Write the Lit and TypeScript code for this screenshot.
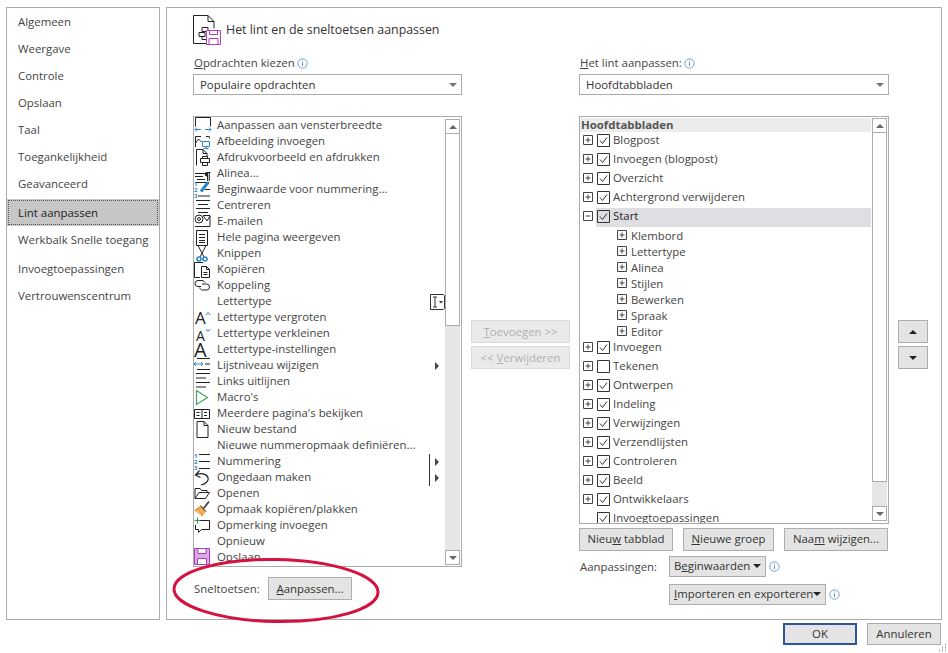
import { LitElement, css, html, svg, TemplateResult } from 'lit';
import { customElement } from 'lit/decorators.js';

const BLUE = '#2b88c8';

// Icons are drawn on a 23x16 box, they may stick out of the row (as in Office)
const digits = svg`<text font-size="6" font-family="Open Sans" font-weight="700" fill=${BLUE} stroke="none"><tspan x="0" y="4">1</tspan><tspan x="0" y="10">2</tspan><tspan x="0" y="16">3</tspan></text>`;
const letterA = (x: number, y: number, size: number) =>
  svg`<text x=${x} y=${y} font-size=${size} font-family="Open Sans" fill="#222" stroke="none">A</text>`;
const icons: Record<string, any> = {
  fit: svg`<path d="M1.5 8.500V-.5h15V8.500"/><path stroke=${BLUE} d="M1 11.500h6M1 11.500l2-2M1 11.500l2 2M17 11.500h-6M17 11.500l-2-2M17 11.500l-2 2"/>`,
  picture: svg`<path d="M1.5 13V2.500H7M1.5 9l3-4 3 3M12 2.500h3M15.5 2.500v2"/><path stroke=${BLUE} d="M8.5 7.500h7v5h-7zM12 12.500v2M9.500 14.500h5"/>`,
  print: svg`<path d="M2.500 15.500v-16H9l4 4v3M9 -.5v4h4"/><path d="M8.500 8.500v-2h5v2M6.500 8.500h9v4h-9zM8.500 12.500v3h5v-3"/>`,
  para: svg`<path d="M1 7.500h10M1 10.500h8M3 13.500h8M1 16.500h14"/><path fill="#222" d="M13 6h3.500v1h-.6v8h-.8V7h-.8v8H13v-4.500a2.200 2.200 0 0 1 0-4.500z" stroke="none"/>`,
  startnum: svg`${digits}<path stroke=${BLUE} stroke-width="3" d="M7 9.500L14 .5"/><path d="M11 7.500h5M4 14h12"/>`,
  center: svg`<path d="M2 2.500h14M4 6.500h10M2 10.500h14M4 14.500h10"/>`,
  mail: svg`<path d="M9 1.500h7v11H6M9.500 2l3.500 5 3-5"/><circle cx="5" cy="5" r="4"/><circle cx="5" cy="5" r="1.500"/><path d="M1 12.500h6"/>`,
  page: svg`<path d="M2.500.5h11v15h-11zM5 4.500h6M5 7.500h6M5 10.500h6M5 12.500h6"/>`,
  cut: svg`<path d="M4 -.5L10 11M12 -.5L6 11"/><g stroke=${BLUE} stroke-width="1.600"><circle cx="5" cy="13" r="2"/><circle cx="11" cy="13" r="2"/></g>`,
  copy: svg`<path d="M6 15.500H.5V.5H9"/><path d="M7.500 4.500h5l3 3v8h-8zM12.500 4.500v3h3M9.500 10.500h4M9.500 12.500h4"/>`,
  link: svg`<path d="M7 8.500H4a3 3 0 0 1 0-6h4c1.500 0 2.500 1 2.800 2"/><path d="M8 6h4.500a3 3 0 0 1 0 6H8.500C7 12 6 11 5.800 9.500"/>`,
  aup: svg`${letterA(1, 14, 17)}<path stroke=${BLUE} d="M12 5l2-2.500L16 5"/>`,
  adown: svg`${letterA(2, 15, 14)}<path stroke=${BLUE} d="M12 3l2 2.500L16 3"/>`,
  abig: svg`${letterA(0, 15, 20)}`,
  level: svg`<path d="M3 .5h13M11 6h5M3 11.500h13"/><path stroke=${BLUE} d="M0 6h9M0 6l2-2M0 6l2 2M9 6L7 4M9 6L7 8"/>`,
  left: svg`<path d="M2 -.5h14M2 4h10M2 8.500h14M2 13h10"/>`,
  macro: svg`<path stroke="#3fa45b" stroke-width="1.200" d="M2.500.5l11 7-11 7z"/>`,
  pages: svg`<path d="M.5 3.500h15v9H.5zM8 3.500v9M2.500 6.500h3M2.500 9.500h3M10 6.500h3M10 9.500h3"/>`,
  file: svg`<path d="M3 15.500v-16h7l4 4v12zM10 -.5v4h4"/>`,
  num: svg`${digits}<path d="M5 .5h11M5 7.500h11M5 14.500h11"/>`,
  undo: svg`<path stroke-width="1.200" d="M5.500.5L1.500 5l5 2.500M1.500 5c5-2.500 11-1.500 12.500 2.500 1 3-2 6.500-7 7.500"/>`,
  open: svg`<path d="M1 12.500V2.500h5l1.500 2H13V6.500M1 12.500h10.500l4-6H5z"/>`,
  brush: svg`<path fill="#eb9c3a" stroke="none" d="M0 8l7-4.500 5 6-4 5z"/><path d="M3 8l4 5M5.500 6.500l4 5" stroke="#fbe2b8"/><path stroke="#444" stroke-width="1.800" d="M9.500 6.500L15 -.5"/><path stroke="#444" d="M6.500 3.500l5.500 6"/>`,
  comment: svg`<path d="M6 2.500h9.500v9H7.500l-3 3v-3h-3V7"/><path stroke="#2f9e4f" d="M3.500 -.5v6M.5 2.500h6"/>`,
  save: svg`<path fill="#dca8ea" stroke="#a63fb8" d="M.5 -1.500h15v16H.5z"/><path fill="#fff" stroke="#a63fb8" d="M4 -1.500h8V3.500H4zM3.500 8.500h9v6h-9z"/>`,
};

interface Cmd { text: string; icon?: string; side?: 'font' | 'sub' | 'subline'; }
const commands: Cmd[] = [
  { text: 'Aanpassen aan vensterbreedte', icon: 'fit' },
  { text: 'Afbeelding invoegen', icon: 'picture' },
  { text: 'Afdrukvoorbeeld en afdrukken', icon: 'print' },
  { text: 'Alinea...', icon: 'para' },
  { text: 'Beginwaarde voor nummering...', icon: 'startnum' },
  { text: 'Centreren', icon: 'center' },
  { text: 'E-mailen', icon: 'mail' },
  { text: 'Hele pagina weergeven', icon: 'page' },
  { text: 'Knippen', icon: 'cut' },
  { text: 'Kopiëren', icon: 'copy' },
  { text: 'Koppeling', icon: 'link' },
  { text: 'Lettertype', side: 'font' },
  { text: 'Lettertype vergroten', icon: 'aup' },
  { text: 'Lettertype verkleinen', icon: 'adown' },
  { text: 'Lettertype-instellingen', icon: 'abig' },
  { text: 'Lijstniveau wijzigen', icon: 'level', side: 'sub' },
  { text: 'Links uitlijnen', icon: 'left' },
  { text: "Macro's", icon: 'macro' },
  { text: "Meerdere pagina's bekijken", icon: 'pages' },
  { text: 'Nieuw bestand', icon: 'file' },
  { text: 'Nieuwe nummeropmaak definiëren...' },
  { text: 'Nummering', icon: 'num', side: 'subline' },
  { text: 'Ongedaan maken', icon: 'undo', side: 'subline' },
  { text: 'Openen', icon: 'open' },
  { text: 'Opmaak kopiëren/plakken', icon: 'brush' },
  { text: 'Opmerking invoegen', icon: 'comment' },
  { text: 'Opnieuw' },
  { text: 'Opslaan', icon: 'save' },
];

const navGroups = [
  ['Algemeen', 'Weergave', 'Controle', 'Opslaan', 'Taal', 'Toegankelijkheid', 'Geavanceerd'],
  ['Lint aanpassen', 'Werkbalk Snelle toegang'],
  ['Invoegtoepassingen', 'Vertrouwenscentrum'],
];

const tabsBefore = ['Blogpost', 'Invoegen (blogpost)', 'Overzicht', 'Achtergrond verwijderen'];
const groups = ['Klembord', 'Lettertype', 'Alinea', 'Stijlen', 'Bewerken', 'Spraak', 'Editor'];
const tabsAfter: [string, boolean][] = [
  ['Invoegen', true], ['Tekenen', false], ['Ontwerpen', true], ['Indeling', true], ['Verwijzingen', true],
  ['Verzendlijsten', true], ['Controleren', true], ['Beeld', true], ['Ontwikkelaars', true],
];

@customElement('app-root')
export class AppRoot extends LitElement {
  static override styles = css`
    :host {
      display: block;
      position: relative;
      width: 948px;
      height: 653px;
      overflow: hidden;
      background: #fff;
      color: #444;
      font: 11.4px/16px 'Open Sans', sans-serif;
    }
    u { text-underline-offset: 1px; }
    .top { display: flex; gap: 6px; padding: 7px 6px 0; height: 620px; box-sizing: border-box; }

    .nav { width: 154px; box-sizing: border-box; border: 1px solid #ababab; padding-top: 1px; }
    .nav-group + .nav-group { margin-top: 1px; }
    .nav-group:last-child { margin-top: 3px; }
    .nav-item { height: 27px; line-height: 25px; padding-left: 11px; white-space: nowrap; }
    .nav-group:nth-child(2) .nav-item { line-height: 27px; }
    .nav-group:nth-child(2) .nav-item.sel {
      background: #c6c6c6;
      color: #222;
      line-height: 28px;
      outline: 1px dotted #555;
      outline-offset: -2px;
    }

    .main { flex: 1; box-sizing: border-box; border: 1px solid #ababab; padding: 7px 0 0 26px; }
    .head { display: flex; align-items: center; height: 30px; gap: 4px; font-size: 12.4px; color: #333; }
    .head svg { display: block; }
    .cols { display: flex; margin-top: 10px; }
    .col-left { width: 269px; }
    .col-mid { width: 117px; box-sizing: border-box; padding: 265px 0 0 9px; }
    .col-right { width: 310px; }
    .col-arrows { padding: 265px 0 0 9px; }

    .label { display: flex; align-items: center; gap: 2px; height: 16px; padding-left: 1px; }
    .info { display: block; flex: none; }
    .select {
      display: flex;
      align-items: center;
      justify-content: space-between;
      height: 21px;
      margin-top: 3px;
      padding: 0 4px 0 6px;
      box-sizing: border-box;
      border: 1px solid #ababab;
      color: #333;
    }
    .caret { width: 0; height: 0; border: 4px solid transparent; border-top: 4px solid #777; border-bottom: 0; }

    .box {
      display: flex;
      margin-top: 21px;
      box-sizing: border-box;
      border: 1px solid #ababab;
      overflow: hidden;
    }
    .box.cmds { height: 451px; }
    .box.tree { height: 408px; }
    .rows { flex: 1; min-width: 0; padding-top: 1px; }
    .cmd { display: flex; align-items: center; height: 16px; white-space: nowrap; }
    .cmd > svg.ico { flex: none; width: 23px; height: 16px; overflow: visible; fill: none; stroke: #222; }
    .cmd .txt { flex: 1; margin-top: -2px; }
    .cmd .side { flex: none; width: 16px; height: 16px; overflow: visible; }

    .bar { flex: none; width: 15px; margin: 2px 1px 1px 0; display: flex; flex-direction: column; background: #e6e6e6; }
    .tree .bar { margin-top: 1px; margin-bottom: 2px; }
    .bar-btn {
      flex: none;
      height: 15px;
      box-sizing: border-box;
      border: 1px solid #ababab;
      background: #fff;
      display: flex;
      align-items: center;
      justify-content: center;
    }
    .bar-thumb { flex: none; box-sizing: border-box; border: 1px solid #ababab; border-top-width: 0; background: #fff; }
    .bar-fill { flex: 1; }
    .up { border: 4px solid transparent; border-bottom: 4px solid #666; border-top: 0; }
    .down { border: 4px solid transparent; border-top: 4px solid #666; border-bottom: 0; }

    .tree-head { height: 14px; line-height: 14px; margin-right: 1px; padding-left: 1px; background: #ececec; font-weight: 700; color: #555; }
    .tab { display: flex; align-items: center; height: 19px; box-sizing: border-box; padding-bottom: 3px; white-space: nowrap; }
    .tab.sel { background: linear-gradient(to right, #fff 16px, #dfdfe3 16px); margin-right: 1px; color: #222; }
    .tab .plus { margin-left: 3px; }
    .tab .check { margin-left: 4px; margin-right: 3px; }
    .sub { display: flex; align-items: center; height: 16px; padding-left: 37px; gap: 4px; white-space: nowrap; }
    .sub span { padding-top: 1px; }
    .plus, .check { display: block; flex: none; fill: none; }
    .noplus { width: 10px; margin-left: 3px; flex: none; }

    .btn {
      display: flex;
      align-items: center;
      justify-content: center;
      height: 23px;
      box-sizing: border-box;
      border: 1px solid #adadad;
      background: #e4e4e4;
      color: #333;
      white-space: nowrap;
    }
    .btn.off { border-color: #dcdcdc; background: #eaeaea; color: #b0b0b0; width: 99px; }
    .btn.off + .btn { margin-top: 3px; }
    .btn.arrow { width: 30px; }
    .btn.arrow + .btn { margin-top: 3px; }
    .btn.drop { height: 21px; justify-content: space-between; padding: 0 4px 1px 4px; }
    .btn.drop .caret { border-top-color: #222; }

    .shortcut { display: flex; align-items: center; margin-top: 10px; padding-left: 1px; }
    .shortcut span.cap { width: 74px; flex: none; }
    .shortcut .btn { width: 84px; }
    .tree-btns { display: flex; gap: 10px; margin-top: 4px; }
    .tree-btns .btn { padding-bottom: 2px; }
    .custom { display: grid; grid-template-columns: 89px auto; row-gap: 7px; margin-top: 5px; padding-left: 1px; align-items: center; }
    .custom-cell { display: flex; align-items: center; gap: 3px; }
    .custom-cell.second { grid-column: 2; }

    .footer { display: flex; justify-content: flex-end; gap: 10px; padding: 3px 7px 0 0; }
    .footer .btn { width: 74px; height: 22px; }
    .footer .btn.def { border: 2px solid #2b579a; }

    .mark { position: absolute; left: 0; top: 0; pointer-events: none; }
  `;

  private info(size = 10) {
    return html`<svg class="info" width=${size + 1} height=${size + 1} viewBox="0 0 11 11">
      <circle cx="5.5" cy="5.5" r="4.7" fill="none" stroke="#6aa3d8"/>
      <path d="M5.5 2.500v1M5.500 4.500v3.500" stroke="#5c8fc4" fill="none"/>
    </svg>`;
  }

  private bar(thumb: number) {
    return html`<div class="bar">
      <div class="bar-btn"><span class="up"></span></div>
      <div class="bar-thumb" style="height:${thumb}px"></div>
      <div class="bar-fill"></div>
      <div class="bar-btn"><span class="down"></span></div>
    </div>`;
  }

  private side(kind: Cmd['side']) {
    if (kind === 'font') {
      return html`<svg class="side" viewBox="0 0 16 16" fill="none" stroke="#333">
        <path d="M1.500 .5h13l1 1v13l-1 1h-13z"/>
        <path d="M4 3h4M4 13h4M6 3v10"/>
        <path fill="#333" stroke="none" d="M10 7h4l-2 2.500z"/>
      </svg>`;
    }
    return html`<svg class="side" viewBox="0 0 16 16">
      ${kind === 'subline' ? svg`<path d="M.5 0v16" stroke="#333"/>` : ''}
      <path fill="#444" d="M6 4l4 4-4 4z"/>
    </svg>`;
  }

  private plus(minus = false) {
    return html`<svg class="plus" width="10" height="10" viewBox="0 0 10 10" stroke="#444">
      <path d="M.5 .5h9v9h-9z"/>
      <path d=${minus ? 'M2.500 5h5' : 'M2.500 5h5M5 2.500v5'}/>
    </svg>`;
  }

  private check(on = true) {
    return html`<svg class="check" width="13" height="13" viewBox="0 0 13 13" stroke="#333">
      <path d="M.5 .5h12v12H.5z"/>
      ${on ? svg`<path d="M3 6.500l2.500 3L10 3.500"/>` : ''}
    </svg>`;
  }

  private tab(text: string, on: boolean, sel = false, minus = false) {
    return html`<div class="tab ${sel ? 'sel' : ''}">
      ${this.plus(minus)}${this.check(on)}<span>${text}</span>
    </div>`;
  }

  override render(): TemplateResult {
    return html`
      <div class="top">
        <div class="nav">
          ${navGroups.map((g) => html`<div class="nav-group">
            ${g.map((n) => html`<div class="nav-item ${n === 'Lint aanpassen' ? 'sel' : ''}">${n}</div>`)}
          </div>`)}
        </div>
        <div class="main">
          <div class="head">
            <svg width="29" height="31" viewBox="0 0 29 31" fill="none" stroke="#222">
              <path d="M.5 28.500V.5H15l6 6v7M15 .5v6h6M.5 28.500H13"/>
              <path d="M9 12.500h6v4H9zM6 17.500h6v4H6zM9 21.500v3h4"/>
              <path fill="#fff" stroke="#b03fc0" d="M13.500 15.500h14v14h-14zM16.500 15.500v4h8v-4M16 29.500v-6h9v6"/>
            </svg>
            <span>Het lint en de sneltoetsen aanpassen</span>
          </div>
          <div class="cols">
            <div class="col-left">
              <div class="label"><span><u>O</u>pdrachten kiezen</span>${this.info()}</div>
              <div class="select"><span>Populaire opdrachten</span><span class="caret"></span></div>
              <div class="box cmds">
                <div class="rows">
                  ${commands.map((c) => html`<div class="cmd">
                    <svg class="ico" viewBox="0 0 23 16">${c.icon ? icons[c.icon] : ''}</svg>
                    <span class="txt">${c.text}</span>
                    ${c.side ? this.side(c.side) : ''}
                  </div>`)}
                </div>
                ${this.bar(192)}
              </div>
              <div class="shortcut">
                <span class="cap">Sneltoetsen:</span>
                <div class="btn"><span><u>A</u>anpassen...</span></div>
              </div>
            </div>
            <div class="col-mid">
              <div class="btn off"><span><u>T</u>oevoegen &gt;&gt;</span></div>
              <div class="btn off"><span>&lt;&lt; <u>V</u>erwijderen</span></div>
            </div>
            <div class="col-right">
              <div class="label"><span><u>H</u>et lint aanpassen:</span>${this.info()}</div>
              <div class="select"><span>Hoofdtabbladen</span><span class="caret"></span></div>
              <div class="box tree">
                <div class="rows">
                  <div class="tree-head">Hoofdtabbladen</div>
                  ${tabsBefore.map((t) => this.tab(t, true))}
                  ${this.tab('Start', true, true, true)}
                  ${groups.map((g) => html`<div class="sub">${this.plus()}<span>${g}</span></div>`)}
                  ${tabsAfter.map(([t, on]) => this.tab(t, on))}
                  <div class="tab"><span class="noplus"></span>${this.check()}<span>Invoegtoepassingen</span></div>
                </div>
                ${this.bar(349)}
              </div>
              <div class="tree-btns">
                <div class="btn" style="width:94px"><span>Nieu<u>w</u> tabblad</span></div>
                <div class="btn" style="width:91px"><span><u>N</u>ieuwe groep</span></div>
                <div class="btn" style="width:104px"><span>Naa<u>m</u> wijzigen...</span></div>
              </div>
              <div class="custom">
                <span>Aanpassingen:</span>
                <div class="custom-cell">
                  <div class="btn drop" style="width:97px"><span>B<u>e</u>ginwaarden</span><span class="caret"></span></div>
                  ${this.info()}
                </div>
                <div class="custom-cell second">
                  <div class="btn drop" style="width:157px"><span><u>I</u>mporteren en exporteren</span><span class="caret"></span></div>
                  ${this.info()}
                </div>
              </div>
            </div>
            <div class="col-arrows">
              <div class="btn arrow"><span class="up" style="border-bottom-color:#222"></span></div>
              <div class="btn arrow"><span class="down" style="border-top-color:#222"></span></div>
            </div>
          </div>
        </div>
      </div>
      <div class="footer">
        <div class="btn def">OK</div>
        <div class="btn">Annuleren</div>
      </div>
      <svg class="mark" width="948" height="653" fill="none">
        <ellipse cx="276" cy="590.500" rx="102" ry="31" transform="rotate(1 276 590)" stroke="#d5123f" stroke-width="3"/>
        <path d="M945 644.500h1M945 647.500h1M942 647.500h1M945 650.500h1M942 650.500h1M939 650.500h1" stroke="#aaa" stroke-width="2"/>
      </svg>
    `;
  }
}
